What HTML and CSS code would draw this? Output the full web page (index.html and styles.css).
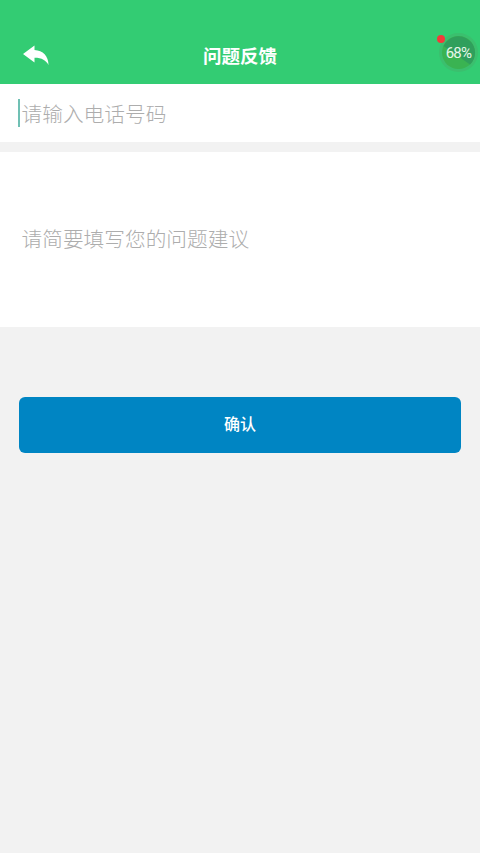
FILE: index.html
```html
<!DOCTYPE html>
<html lang="zh">
<head>
<meta charset="utf-8">
<title>问题反馈</title>
<link rel="stylesheet" href="styles.css">
</head>
<body>
<div class="page">
  <header class="topbar">
    <svg class="back" viewBox="0 0 26 20" aria-hidden="true"><path d="M0 9 L11.5 0.5 V5 C20 5.5 25.5 11 25.5 20 C23 15.5 19 12.8 11.5 12.8 V17.5 Z"/></svg>
    <h1 class="title">问题反馈</h1>
    <div class="meter">
      <svg class="meter-ring" viewBox="0 0 40 40" aria-hidden="true">
        <circle cx="19.5" cy="19.5" r="19.5" fill="#3bbf6e"/>
        <circle cx="19.5" cy="19.5" r="16.5" fill="#3ab352"/>
        <path d="M11 5.7 A16.5 16.5 0 0 1 36 19.5 A16.5 16.5 0 0 1 31 31.5 L4.5 13 A16.5 16.5 0 0 1 11 5.7 Z" fill="#2f9f5c"/>
      </svg>
      <span class="meter-dot"></span>
      <span class="meter-text">68%</span>
    </div>
  </header>
  <div class="field phone"><span class="caret"></span><span class="hint">请输入电话号码</span></div>
  <div class="field advice"><span class="hint">请简要填写您的问题建议</span></div>
  <button class="confirm" type="button">确认</button>
</div>
</body>
</html>
```
FILE: styles.css
```css
html, body { margin: 0; padding: 0; }
body { width: 480px; height: 853px; overflow: hidden; background: #f2f2f2; font-family: "Noto Sans CJK SC", "Noto Sans", sans-serif; }
.page { display: flex; flex-direction: column; height: 853px; }
.topbar { position: relative; height: 84px; flex: none; background: #33cc73; display: flex; align-items: center; justify-content: center; padding-top: 26px; box-sizing: border-box; }
.back { position: absolute; left: 23px; top: 45px; width: 26px; height: 20px; fill: #fff; }
.title { margin: 0; color: #fff; font-size: 18.5px; font-weight: 700; line-height: 28px; }
.meter { position: absolute; left: 439px; top: 33px; width: 40px; height: 40px; }
.meter-ring { width: 40px; height: 40px; display: block; }
.meter-dot { position: absolute; left: -2px; top: 2px; width: 8px; height: 8px; border-radius: 50%; background: #f23a3a; }
.meter-text { position: absolute; left: 0; right: 1px; top: 10px; text-align: center; color: #e6f6ea; font-family: Roboto, sans-serif; font-weight: 400; font-size: 15px; letter-spacing: -0.7px; line-height: 20px; }
.field { background: #fff; display: flex; align-items: center; padding-left: 21.5px; }
.phone { position: relative; height: 58px; padding-bottom: 1px; box-sizing: border-box; }
.advice { height: 175px; margin-top: 10px; padding-bottom: 3px; box-sizing: border-box; }
.caret { position: absolute; left: 18px; top: 15px; width: 2px; height: 28px; background: #70c0b4; }
.hint { color: #adadad; font-size: 20.7px; font-weight: 300; line-height: 30px; }
.confirm { display: block; margin: 70px 19px 0; height: 56px; padding: 0 0 5px; flex: none; border: 0; border-radius: 6px; background: #0085c3; color: #fff; font: 500 16px/24px "Noto Sans CJK SC", sans-serif; }
```
